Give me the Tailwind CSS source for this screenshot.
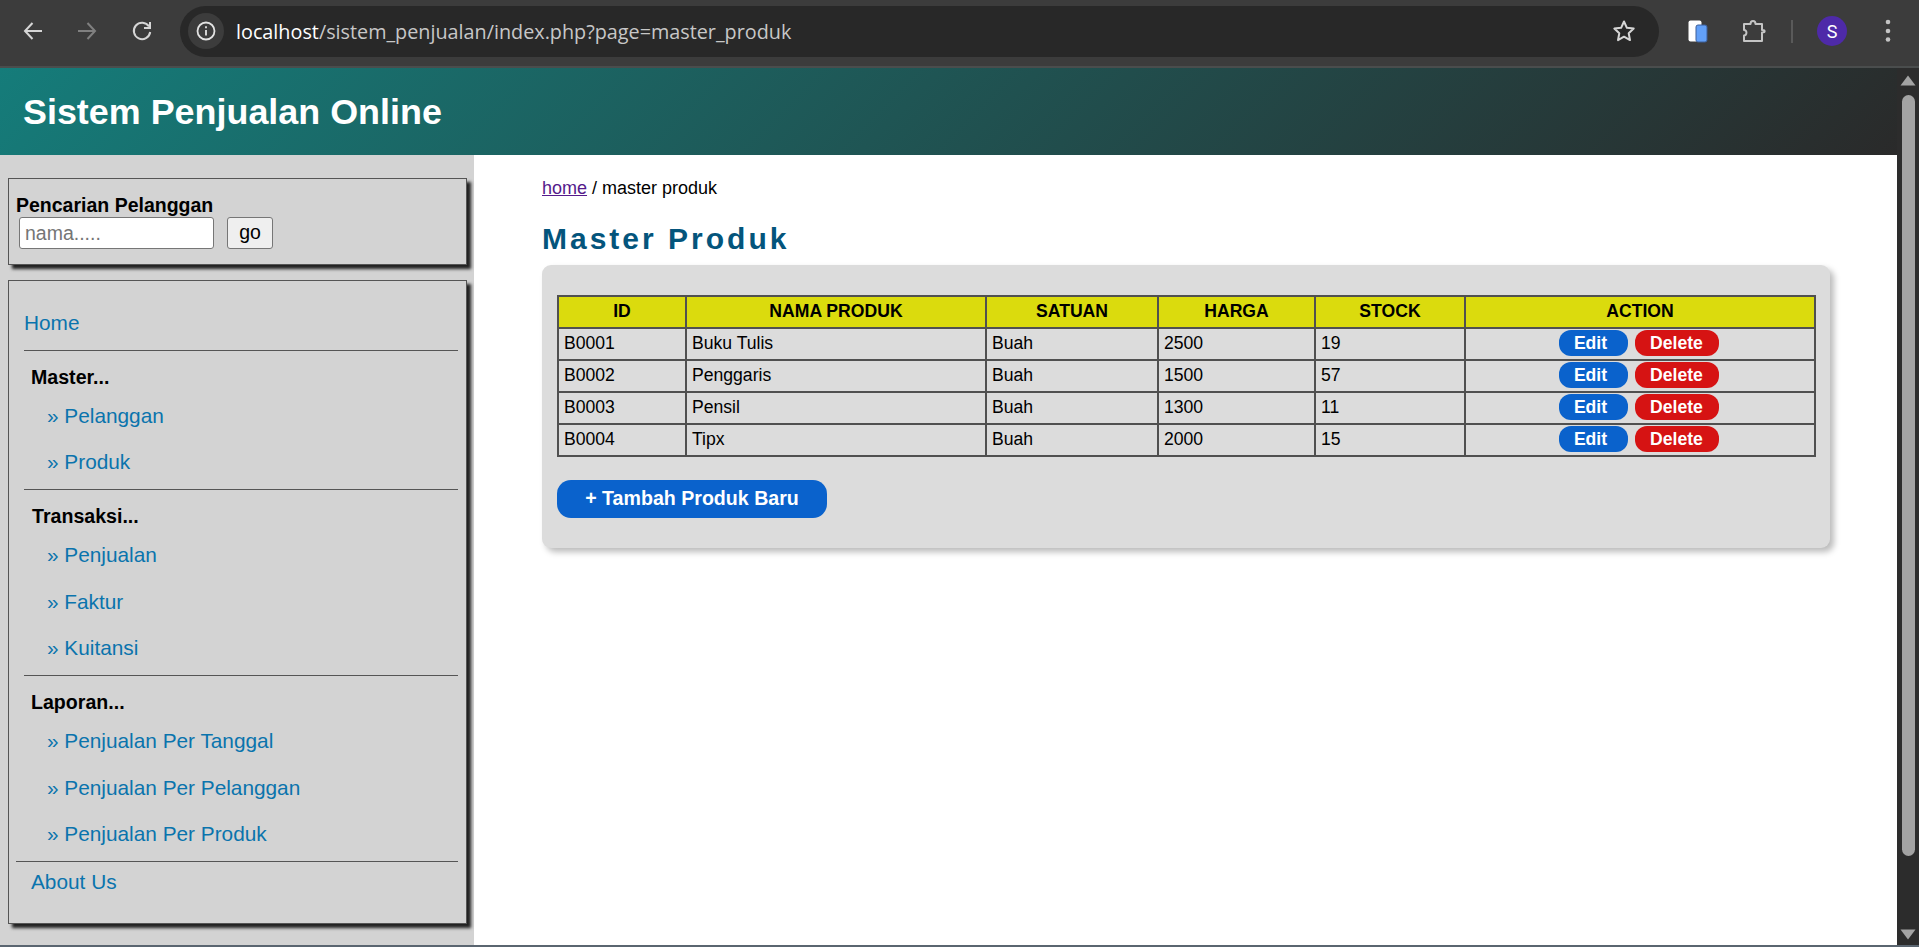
<!DOCTYPE html>
<html lang="en">
  <head>
    <meta charset="UTF-8" />
    <meta name="viewport" content="width=device-width, initial-scale=1.0" />
    <title>Master Produk - Sistem Penjualan Online</title>
    <script src="https://cdn.jsdelivr.net/npm/@tailwindcss/browser@4"></script>
  </head>
  <body class="h-[947px] overflow-hidden bg-white font-['Liberation_Sans',Arial,sans-serif] text-black">
    <div class="flex h-[947px] flex-col">
      <!-- browser toolbar -->
      <div class="flex h-[68px] shrink-0 items-center border-b-2 border-[#4a4d4d] bg-[#3c3c3c] pb-[4px]">
        <div class="flex w-[180px] shrink-0 items-center">
          <svg class="ml-[22px]" width="22" height="22" viewBox="0 0 22 22" fill="none" stroke="#d6d6d6" stroke-width="2"><path d="M20 11H3M10.5 3L3 11l7.5 8" /></svg>
          <svg class="ml-[32px]" width="22" height="22" viewBox="0 0 22 22" fill="none" stroke="#808080" stroke-width="2"><path d="M2 11h17M11.500 3L19 11l-7.500 8" /></svg>
          <svg class="ml-[33px]" width="22" height="22" viewBox="0 0 22 22" fill="none" stroke="#d6d6d6" stroke-width="2"><path d="M18 6.500A8.200 8.200 0 1 0 19.200 12" /><path d="M19 2v6h-6" /></svg>
        </div>
        <div class="flex h-[51px] w-[1479px] shrink-0 items-center rounded-full bg-[#282828] pl-[8px]">
          <div class="flex size-[36px] items-center justify-center rounded-full bg-[#3c3c3c]">
            <svg width="20" height="20" viewBox="0 0 20 20" fill="none" stroke="#e3e3e3" stroke-width="1.800"><circle cx="10" cy="10" r="8.500" /><path d="M10 9v5.500M10 5.200v2" /></svg>
          </div>
          <div class="mt-[2px] ml-[12px] font-['Open_Sans',sans-serif] text-[19.800px] whitespace-nowrap text-[#c7c7c7]"><span class="text-white">localhost</span>/sistem_penjualan/index.php?page=master_produk</div>
          <svg class="mr-[23px] ml-auto" width="24" height="24" viewBox="0 0 24 24" fill="none" stroke="#d6d6d6" stroke-width="2" stroke-linejoin="round"><path d="M12 2.500l2.900 6.300 6.800.8-5 4.700 1.300 6.800-6-3.400-6 3.400 1.300-6.800-5-4.700 6.800-.8z" /></svg>
        </div>
        <svg class="ml-[29px]" width="20" height="24" viewBox="0 0 20 24"><rect x="0.500" y="1.500" width="13" height="21" rx="2" fill="#fff" /><rect x="8" y="6" width="11" height="17" rx="2" fill="#62a0f8" stroke="#3c5f99" /></svg>
        <svg class="ml-[33px]" width="26" height="26" viewBox="0 0 26 26" fill="none" stroke="#c4c4c4" stroke-width="2" stroke-linejoin="round"><path d="M3 6h6.500c0-4 5-4 5 0H21v6c3.500 0 3.500 2.500 0 2.500V23H3v-5.500c3 0 3.500-5.500 0-5.500z" /></svg>
        <div class="ml-[24px] h-[23px] w-[2px] bg-[#5a5a5a]"></div>
        <div class="ml-[24px] flex size-[30px] items-center justify-center rounded-full bg-[#4e2aa8] font-['Roboto',sans-serif] text-[18px] text-white">S</div>
        <svg class="ml-[38px]" width="6" height="24" viewBox="0 0 6 24" fill="#c4c4c4"><circle cx="3" cy="3" r="2.300" /><circle cx="3" cy="12" r="2.300" /><circle cx="3" cy="20.500" r="2.300" /></svg>
      </div>

      <div class="flex min-h-0 flex-1">
        <div class="flex min-w-0 flex-1 flex-col">
          <header class="flex h-[87px] shrink-0 items-center bg-[linear-gradient(135deg,#157c7a,#2a2a2a)] pt-[2px] pl-[23px]">
            <h1 class="text-[35.900px] font-bold text-white">Sistem Penjualan Online</h1>
          </header>

          <div class="flex min-h-0 flex-1">
            <!-- sidebar -->
            <aside class="w-[474px] shrink-0 bg-[#d3d3d3] pt-[23px] pl-[8px]">
              <div class="h-[87px] w-[459px] border border-[#555] pt-[15px] pl-[7px] shadow-[4px_4px_3px_#222]">
                <div class="h-[23px] text-[19.500px] leading-[23px] font-bold">Pencarian Pelanggan</div>
                <form class="flex gap-[13px] pl-[3px]">
                  <input type="text" placeholder="nama....." class="h-[32px] w-[195px] rounded-[3px] border border-[#767676] bg-white px-[5px] text-[19.500px] placeholder:text-[#757575]" />
                  <button type="button" class="h-[32px] w-[46px] rounded-[3px] border border-[#767676] bg-[#efefef] text-[19.500px]">go</button>
                </form>
              </div>

              <nav class="mt-[15px] h-[644px] w-[459px] border border-[#555] pt-[19px] pl-[15px] text-[20.800px] text-[#0a74ad] shadow-[4px_4px_3px_#222]">
                <a class="flex h-[46px] items-center">Home</a>
                <div class="mt-[4px] mr-[8px] h-px bg-[#555]"></div>

                <div class="mt-[14px] mb-[2px] flex h-[26px] items-center pl-[7px] text-[19.600px] font-bold text-black">Master...</div>
                <a class="flex h-[46px] items-center pl-[23px]">» Pelanggan</a>
                <a class="flex h-[46px] items-center pl-[23px]">» Produk</a>
                <div class="mt-[4px] mr-[8px] h-px bg-[#555]"></div>

                <div class="mt-[14px] mb-[2px] flex h-[26px] items-center pl-[8px] text-[19.600px] font-bold text-black">Transaksi...</div>
                <a class="flex h-[46px] items-center pl-[23px]">» Penjualan</a>
                <a class="flex h-[47px] items-center pl-[23px]">» Faktur</a>
                <a class="flex h-[46px] items-center pl-[23px]">» Kuitansi</a>
                <div class="mt-[4px] mr-[8px] h-px bg-[#555]"></div>

                <div class="mt-[14px] mb-[2px] flex h-[26px] items-center pl-[7px] text-[19.600px] font-bold text-black">Laporan...</div>
                <a class="flex h-[46px] items-center pl-[23px]">» Penjualan Per Tanggal</a>
                <a class="mt-px flex h-[46px] items-center pl-[23px]">» Penjualan Per Pelanggan</a>
                <a class="flex h-[46px] items-center pl-[23px]">» Penjualan Per Produk</a>
                <div class="mt-[4px] mr-[8px] -ml-[8px] h-px bg-[#555]"></div>

                <a class="flex h-[40px] items-center pl-[7px]">About Us</a>
              </nav>
            </aside>

            <!-- content -->
            <main class="min-w-0 flex-1 pt-[21px] pl-[68px]">
              <div class="h-[24px] text-[18px] leading-[24px]"><a class="text-[#551a8b] underline">home</a> / master produk</div>
              <h2 class="mt-[21px] h-[36px] text-[30px] leading-[36px] font-bold tracking-[3px] text-[#04557c]">Master Produk</h2>
              <section class="mt-[8px] h-[283px] w-[1288px] rounded-[9px] bg-[#dcdcdc] pt-[30px] pl-[15px] shadow-[4px_4px_6px_#bbb]">
                <table class="w-[1257px] table-fixed border-collapse text-[17.600px] leading-[20px]">
                  <colgroup>
                    <col class="w-[128px]" />
                    <col class="w-[300px]" />
                    <col class="w-[172px]" />
                    <col class="w-[157px]" />
                    <col class="w-[150px]" />
                    <col class="w-[350px]" />
                  </colgroup>
                  <thead>
                    <tr class="h-[32px] bg-[#dbdb0d]">
                      <th class="border-2 border-[#505050] pb-[2px]">ID</th>
                      <th class="border-2 border-[#505050] pb-[2px]">NAMA PRODUK</th>
                      <th class="border-2 border-[#505050] pb-[2px]">SATUAN</th>
                      <th class="border-2 border-[#505050] pb-[2px]">HARGA</th>
                      <th class="border-2 border-[#505050] pb-[2px]">STOCK</th>
                      <th class="border-2 border-[#505050] pb-[2px]">ACTION</th>
                    </tr>
                  </thead>
                  <tbody>
                    <tr class="h-[32px]">
                      <td class="border-2 border-[#505050] pb-[2px] pl-[5px]">B0001</td>
                      <td class="border-2 border-[#505050] pb-[2px] pl-[5px]">Buku Tulis</td>
                      <td class="border-2 border-[#505050] pb-[2px] pl-[5px]">Buah</td>
                      <td class="border-2 border-[#505050] pb-[2px] pl-[5px]">2500</td>
                      <td class="border-2 border-[#505050] pb-[2px] pl-[5px]">19</td>
                      <td class="border-2 border-[#505050] pb-[2px]">
                        <div class="flex justify-center gap-[7px] pr-[3px] font-bold text-white">
                          <a class="flex h-[26px] w-[69px] items-center justify-center rounded-[12px] bg-[#0a62cc] pr-[5px]">Edit</a>
                          <a class="flex h-[26px] w-[84px] items-center justify-center rounded-[12px] bg-[#d61313]">Delete</a>
                        </div>
                      </td>
                    </tr>
                    <tr class="h-[32px]">
                      <td class="border-2 border-[#505050] pb-[2px] pl-[5px]">B0002</td>
                      <td class="border-2 border-[#505050] pb-[2px] pl-[5px]">Penggaris</td>
                      <td class="border-2 border-[#505050] pb-[2px] pl-[5px]">Buah</td>
                      <td class="border-2 border-[#505050] pb-[2px] pl-[5px]">1500</td>
                      <td class="border-2 border-[#505050] pb-[2px] pl-[5px]">57</td>
                      <td class="border-2 border-[#505050] pb-[2px]">
                        <div class="flex justify-center gap-[7px] pr-[3px] font-bold text-white">
                          <a class="flex h-[26px] w-[69px] items-center justify-center rounded-[12px] bg-[#0a62cc] pr-[5px]">Edit</a>
                          <a class="flex h-[26px] w-[84px] items-center justify-center rounded-[12px] bg-[#d61313]">Delete</a>
                        </div>
                      </td>
                    </tr>
                    <tr class="h-[32px]">
                      <td class="border-2 border-[#505050] pb-[2px] pl-[5px]">B0003</td>
                      <td class="border-2 border-[#505050] pb-[2px] pl-[5px]">Pensil</td>
                      <td class="border-2 border-[#505050] pb-[2px] pl-[5px]">Buah</td>
                      <td class="border-2 border-[#505050] pb-[2px] pl-[5px]">1300</td>
                      <td class="border-2 border-[#505050] pb-[2px] pl-[5px]">11</td>
                      <td class="border-2 border-[#505050] pb-[2px]">
                        <div class="flex justify-center gap-[7px] pr-[3px] font-bold text-white">
                          <a class="flex h-[26px] w-[69px] items-center justify-center rounded-[12px] bg-[#0a62cc] pr-[5px]">Edit</a>
                          <a class="flex h-[26px] w-[84px] items-center justify-center rounded-[12px] bg-[#d61313]">Delete</a>
                        </div>
                      </td>
                    </tr>
                    <tr class="h-[32px]">
                      <td class="border-2 border-[#505050] pb-[2px] pl-[5px]">B0004</td>
                      <td class="border-2 border-[#505050] pb-[2px] pl-[5px]">Tipx</td>
                      <td class="border-2 border-[#505050] pb-[2px] pl-[5px]">Buah</td>
                      <td class="border-2 border-[#505050] pb-[2px] pl-[5px]">2000</td>
                      <td class="border-2 border-[#505050] pb-[2px] pl-[5px]">15</td>
                      <td class="border-2 border-[#505050] pb-[2px]">
                        <div class="flex justify-center gap-[7px] pr-[3px] font-bold text-white">
                          <a class="flex h-[26px] w-[69px] items-center justify-center rounded-[12px] bg-[#0a62cc] pr-[5px]">Edit</a>
                          <a class="flex h-[26px] w-[84px] items-center justify-center rounded-[12px] bg-[#d61313]">Delete</a>
                        </div>
                      </td>
                    </tr>
                  </tbody>
                </table>
                <a class="mt-[23px] flex h-[38px] w-[270px] items-center justify-center rounded-[14px] bg-[#0a62cc] text-[19.600px] font-bold text-white">+ Tambah Produk Baru</a>
              </section>
            </main>
          </div>
        </div>

        <!-- scrollbar -->
        <div class="flex w-[22px] shrink-0 flex-col items-center bg-[#2c2c2c] pt-[7px] pb-[5px]">
          <svg width="16" height="11" viewBox="0 0 16 11" fill="#a3a3a3"><path d="M8 0.500L15.500 10.500H0.500z" /></svg>
          <div class="mt-[9px] h-[761px] w-[13px] rounded-full bg-[#a3a3a3]"></div>
          <svg class="mt-auto" width="16" height="11" viewBox="0 0 16 11" fill="#a3a3a3"><path d="M8 10.500L15.500 0.500H0.500z" /></svg>
        </div>
      </div>
      <div class="h-[2px] shrink-0 bg-[#5a6570]"></div>
    </div>
  </body>
</html>
